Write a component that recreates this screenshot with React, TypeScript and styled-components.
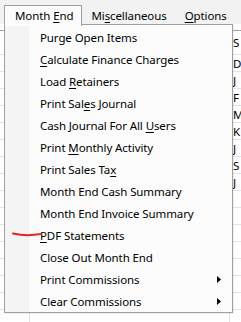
import React from 'react';
import styled, { createGlobalStyle } from 'styled-components';

const GlobalStyle = createGlobalStyle`
  html, body {
    margin: 0;
    padding: 0;
    background: #ffffff;
  }
  body {
    font-family: 'Noto Sans', 'Liberation Sans', sans-serif;
    font-size: 11.5px;
    letter-spacing: -0.1px;
    color: #000;
  }
`;

const Screen = styled.div`
  position: relative;
  width: 241px;
  height: 322px;
  overflow: hidden;
  background: #ffffff;
`;

const MenuBar = styled.div`
  display: flex;
  align-items: flex-start;
  height: 24px;
  padding-left: 4px;
  background: #f2f2f2;
`;

const TopItem = styled.div<{ $open?: boolean }>`
  position: relative;
  z-index: 3;
  display: flex;
  align-items: center;
  height: 19px;
  margin-top: 5px;
  padding: ${({ $open }) => ($open ? '0 8px 1px 10px' : '0 8px 1px 8px')};
  border: 1px solid ${({ $open }) => ($open ? '#a0a0a0' : 'transparent')};
  border-bottom: none;
  background: ${({ $open }) => ($open ? '#fcfcfc' : 'transparent')};
  white-space: nowrap;
`;

const Sheet = styled.div`
  border-top: 6px solid #ffffff;
`;

const HeaderLine = styled.div`
  height: 0;
  border-bottom: 1px solid #a0a0a0;
`;

const Row = styled.div<{ $tall?: boolean }>`
  display: grid;
  grid-template-columns: 30px 200px 1fr;
  height: ${({ $tall }) => ($tall ? '23px' : '16px')};
  border-bottom: 1px solid #e3e3e3;
`;

const Cell = styled.div`
  display: flex;
  align-items: center;
  padding-left: 3px;
  border-right: 1px solid #e3e3e3;
  white-space: nowrap;
  overflow: hidden;
  &:last-child {
    border-right: none;
  }
`;

const Dropdown = styled.div`
  position: absolute;
  z-index: 2;
  top: 24px;
  left: 4px;
  width: 227px;
  padding: 1px 0 0;
  border: 1px solid #a0a0a0;
  background: linear-gradient(to right, #f4f4f4 0, #f4f4f4 24px, #fcfcfc 24px);
  box-shadow: 1px 1px 0 rgba(0, 0, 0, 0.06);
`;

const Item = styled.div`
  display: flex;
  align-items: center;
  height: 22px;
  padding-left: 35px;
  padding-right: 11px;
  white-space: nowrap;
`;

const ItemText = styled.span`
  flex: 1;
`;

const Arrow = styled.svg`
  display: block;
  width: 4px;
  height: 7px;
`;

const Mark = styled.svg`
  position: absolute;
  z-index: 4;
  left: 0;
  top: 0;
  width: 60px;
  height: 260px;
  pointer-events: none;
`;

const Key = styled.u`
  text-decoration-thickness: 1px;
  text-underline-offset: 2px;
`;

const Label = ({ text, at }: { text: string; at?: number }) =>
  at === undefined ? (
    <span>{text}</span>
  ) : (
    <span>
      {text.slice(0, at)}
      <Key>{text[at]}</Key>
      {text.slice(at + 1)}
    </span>
  );

const topMenus = [
  { text: 'Month End', at: 6, open: true },
  { text: 'Miscellaneous', at: 2 },
  { text: 'Options', at: 0 },
];

const items: { text: string; at?: number; sub?: boolean }[] = [
  { text: 'Purge Open Items' },
  { text: 'Calculate Finance Charges', at: 0 },
  { text: 'Load Retainers', at: 5 },
  { text: 'Print Sales Journal', at: 9 },
  { text: 'Cash Journal For All Users', at: 21 },
  { text: 'Print Monthly Activity', at: 6 },
  { text: 'Print Sales Tax', at: 14 },
  { text: 'Month End Cash Summary' },
  { text: 'Month End Invoice Summary' },
  { text: 'PDF Statements', at: 0 },
  { text: 'Close Out Month End' },
  { text: 'Print Commissions', sub: true },
  { text: 'Clear Commissions', sub: true },
];

const names = ['S', 'D', 'J', 'F', 'M', 'K', 'J', 'S', 'J', '', '', '', '', '', '', '', '', ''];

export default function App() {
  return (
    <Screen>
      <GlobalStyle />
      <MenuBar>
        {topMenus.map((m) => (
          <TopItem key={m.text} $open={m.open}>
            <Label text={m.text} at={m.at} />
          </TopItem>
        ))}
      </MenuBar>
      <Sheet>
        <HeaderLine />
        {names.map((n, i) => (
          <Row key={i} $tall={i === 0}>
            <Cell />
            <Cell />
            <Cell>{n}</Cell>
          </Row>
        ))}
      </Sheet>
      <Dropdown>
        {items.map((it) => (
          <Item key={it.text}>
            <ItemText>
              <Label text={it.text} at={it.at} />
            </ItemText>
            {it.sub && (
              <Arrow viewBox="0 0 4 7">
                <polygon points="0,0 4,3.5 0,7" fill="#000" />
              </Arrow>
            )}
          </Item>
        ))}
      </Dropdown>
      <Mark viewBox="0 0 60 260">
        <path
          d="M13 233.5 Q 26 236.5 41 234"
          stroke="#e3261f"
          strokeWidth="2"
          fill="none"
          strokeLinecap="round"
        />
      </Mark>
    </Screen>
  );
}
